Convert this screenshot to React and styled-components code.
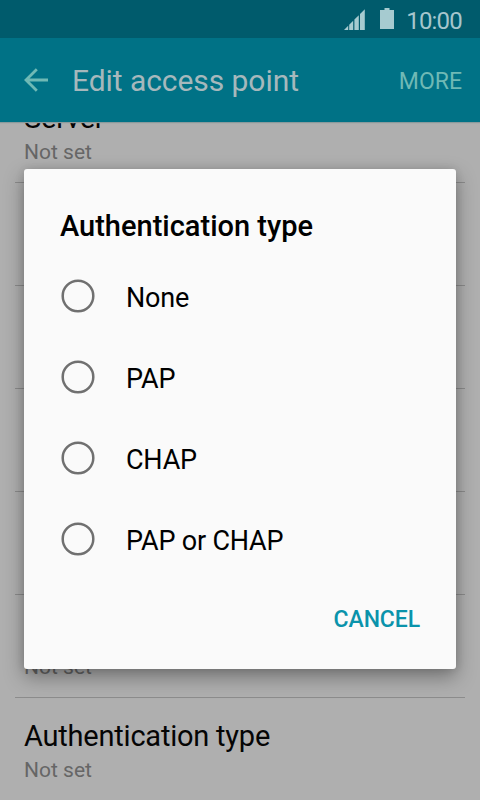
import { useState } from 'react';
import styled, { createGlobalStyle } from 'styled-components'

const options = ['None', 'PAP', 'CHAP', 'PAP or CHAP'];

// rows of the list, the ones without text are fully covered by the dialog
const settings = [
    { label: 'Server', value: 'Not set' },
    {},
    {},
    {},
    {},
    { value: 'Not set' },
    { label: 'Authentication type', value: 'Not set' },
];

function App() {
    const [selected, setSelected] = useState(null);

    return (
        <>
            <GlobalStyle />
            <Screen>
                <StatusBar>
                    <SignalIcon width="21" height="21" viewBox="0 0 21 21">
                        <path d="M0 21L4.2 16.8V21ZM5.2 15.8L9.2 11.8V21H5.2ZM10.4 10.6L14.8 6.2V21H10.4ZM16 5L20.8 0.2V21H16Z" />
                    </SignalIcon>
                    <BatteryIcon width="14" height="21" viewBox="0 0 14 21">
                        <path d="M4.5 0H9.5V2H14V21H0V2H4.5Z" />
                    </BatteryIcon>
                    <Clock>10:00</Clock>
                </StatusBar>
                <Toolbar>
                    <BackIcon width="25" height="24" viewBox="0 0 25 24">
                        <path d="M12.8 1.2L2 12L12.8 22.8M2 12H24" />
                    </BackIcon>
                    <Title>Edit access point</Title>
                    <More>MORE</More>
                </Toolbar>
                <List>
                    {settings.map((item, index) => (
                        <Row key={index}>
                            <Label>{item.label}</Label>
                            <Value>{item.value}</Value>
                        </Row>
                    ))}
                </List>
                <Dialog>
                    <DialogTitle>Authentication type</DialogTitle>
                    <Options>
                        {options.map((name) => (
                            <Option key={name} onClick={() => { setSelected(name) }}>
                                <Radio width="34" height="34" viewBox="0 0 34 34" $checked={selected === name}>
                                    <circle cx="17" cy="17" r="15.3" />
                                </Radio>
                                <OptionText>{name}</OptionText>
                            </Option>
                        ))}
                    </Options>
                    <Cancel onClick={() => { setSelected(null) }}>CANCEL</Cancel>
                </Dialog>
            </Screen>
        </>
    )
}

const GlobalStyle = createGlobalStyle`
body{
    margin:0;
    font-family:Roboto, "Liberation Sans", sans-serif;
}
`
const Screen = styled.div`
position:relative;
display:flex;
flex-direction:column;
width:480px;
height:800px;
overflow:hidden;
background-color:#afafaf;
`
const StatusBar = styled.div`
display:flex;
flex:none;
justify-content:flex-end;
height:38px;
padding-right:18px;
box-sizing:border-box;
background-color:#005b6c;
color:#a6c6cd;
`
const SignalIcon = styled.svg`
margin:9px 15px 0 0;
fill:#a6cbd0;
`
const BatteryIcon = styled.svg`
margin:8px 12px 0 0;
fill:#a6cbd0;
`
const Clock = styled.span`
font-size:24px;
line-height:28px;
margin-top:7px;
letter-spacing:-0.8px;
`
const Toolbar = styled.div`
display:flex;
flex:none;
align-items:center;
height:84px;
padding:0 18px 0 24px;
box-sizing:border-box;
background-color:#007286;
position:relative;
box-shadow:0 1px 1px #8a9a9c;
`
const BackIcon = styled.svg`
fill:none;
stroke:#6fb9b5;
stroke-width:2.8;
`
const Title = styled.h1`
margin:2px auto 0 23px;
font-size:30px;
line-height:36px;
font-weight:400;
letter-spacing:-0.06px;
color:#a6b8bc;
white-space:nowrap;
`
const More = styled.span`
margin-top:4px;
font-size:23px;
line-height:28px;
color:#6fb9b5;
`
const List = styled.div`
display:flex;
flex-direction:column;
margin-top:-42px;
padding:0 15px;
`
const Row = styled.div`
flex:none;
height:103px;
padding:21px 9px 0;
box-sizing:border-box;
border-bottom:1px solid #8c8c8c;
`
const Label = styled.div`
height:34px;
font-size:29px;
line-height:34px;
letter-spacing:-0.22px;
color:#050505;
`
const Value = styled.div`
margin-top:4px;
font-size:21px;
line-height:26px;
color:#666;
`
const Dialog = styled.div`
position:absolute;
left:24px;
top:169px;
display:flex;
flex-direction:column;
width:432px;
height:500px;
padding:0 36px;
box-sizing:border-box;
border-radius:3px;
background-color:#fafafa;
box-shadow:0 8px 20px rgba(0,0,0,0.35), 0 0 8px rgba(0,0,0,0.12);
`
const DialogTitle = styled.h2`
margin:40px 0 12px;
font-size:29px;
line-height:34px;
font-weight:500;
color:#000;
white-space:nowrap;
`
const Options = styled.div`
display:flex;
flex-direction:column;
`
const Option = styled.div`
display:flex;
align-items:center;
height:81px;
`
const Radio = styled.svg`
margin-left:1px;
fill:${props => props.$checked ? '#0a93ab' : 'none'};
stroke:#707070;
stroke-width:2.5;
`
const OptionText = styled.span`
margin:4px 0 0 31px;
font-size:27px;
line-height:32px;
letter-spacing:-0.2px;
color:#000;
`
const Cancel = styled.button`
align-self:flex-end;
margin-top:27px;
padding:0;
border:none;
background:none;
font-family:inherit;
font-size:23px;
line-height:28px;
font-weight:500;
letter-spacing:-0.1px;
color:#0a93ab;
`

export default App;
